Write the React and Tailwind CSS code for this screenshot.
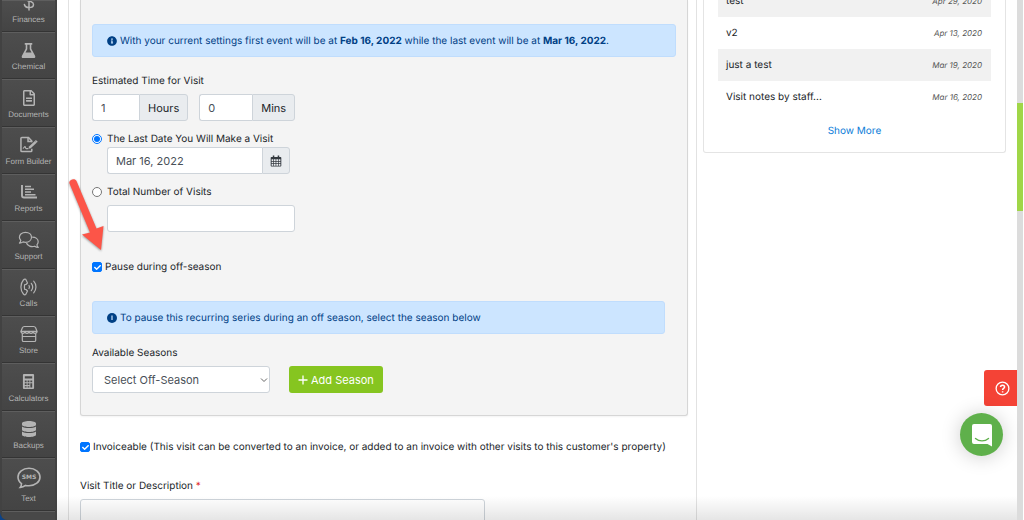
import { FaCheck, FaDatabase, FaInfoCircle, FaRegFileAlt } from 'react-icons/fa';

function DollarIcon() {
  return (
    <svg viewBox="0 0 12 20" className="h-5 w-3 shrink-0" fill="none" stroke="currentColor" strokeWidth="1.500" strokeLinecap="round" aria-hidden="true">
      <path d="M6 1v18M10.300 6.500C9.800 4.600 8.200 3.700 6 3.700c-2.500 0-4.200 1.100-4.200 3 0 4.500 8.700 2.100 8.700 6.700 0 1.900-1.800 3.100-4.500 3.100-2.400 0-4.200-1-4.600-3" />
    </svg>
  );
}

function FlaskIcon() {
  return (
    <svg viewBox="0 0 16 18" className="h-[17px] w-[15px]" fill="currentColor" aria-hidden="true">
      <path
        fillRule="evenodd"
        d="M4 1h8v1.800h-1v4.400l4 7.300c.7 1.300 0 2.500-1.300 2.500H2.300C1 17 .3 15.800 1 14.500l4-7.300V2.800H4zM6.700 2.800v4.900L4.800 11.200h6.400L9.300 7.700V2.800z"
      />
    </svg>
  );
}

function FormIcon() {
  return (
    <svg viewBox="0 0 20 18" className="h-[17px] w-[19px]" fill="none" stroke="currentColor" strokeWidth="1.600" aria-hidden="true">
      <path d="M13.500 6.500V5.300L10 1.500H3a1 1 0 0 0-1 1v13a1 1 0 0 0 1 1h9.500a1 1 0 0 0 1-1v-2" />
      <path d="M9.500 1.500v4.300h4" />
      <path d="M4 13.300c1-.2 1.500-2 2.300-2 .6 0 .4 2 1.200 2h2.300" strokeWidth="1.200" />
      <path d="M10 13.600l.5-2.400 6.200-5.900 1.900 1.900-6.200 5.900z" fill="currentColor" stroke="none" />
      <path d="M17.300 4.700l1.900 1.900" />
    </svg>
  );
}

function ReportsIcon() {
  return (
    <svg viewBox="0 0 18 16" className="h-4 w-[18px]" fill="none" stroke="currentColor" strokeWidth="1.900" aria-hidden="true">
      <path d="M2 1v10.500a2 2 0 0 0 2 2h13" />
      <path d="M5 2.500h6M5 5.300h9M5 8h6M5 10.700h10.500" strokeWidth="1.500" />
    </svg>
  );
}

function SupportIcon() {
  return (
    <svg viewBox="0 0 22 18" className="h-[18px] w-[22px]" fill="none" stroke="currentColor" strokeWidth="1.200" strokeLinejoin="round" aria-hidden="true">
      <path d="M7.500 1.300c3.500 0 6 2.200 6 5s-2.500 5-6 5c-.9 0-1.700-.1-2.500-.4-1 .8-2.200 1.200-3.600 1.200.8-.8 1.300-1.700 1.400-2.700C2 8.500 1.400 7.400 1.400 6.300c0-2.800 2.600-5 6.100-5z" />
      <path d="M14.200 6.200c3.500 0 6 2 6 4.600 0 1.200-.5 2.200-1.300 3 .1 1 .6 1.900 1.400 2.600-1.400 0-2.600-.4-3.600-1.200-3.400 1.100-7.300-.3-8.200-3.200" />
    </svg>
  );
}

function CallsIcon() {
  return (
    <svg viewBox="0 0 18 18" className="h-[18px] w-[18px]" fill="none" stroke="currentColor" strokeWidth="1.200" strokeLinecap="round" strokeLinejoin="round" aria-hidden="true">
      <path d="M5.700 1.300L7.500 5 6 6.500H4.800c-.5 1.600-.5 3.400 0 5H6L7.500 13l-1.800 3.600c-.8.500-1.700.1-2.300-.6-3.300-3.700-3.300-10.300 0-14 .6-.7 1.500-1.200 2.300-.7z" />
      <path d="M9 7.500c.6.900.6 2.100 0 3M11.300 5.300c1.700 2.200 1.700 5.200 0 7.400M13.700 3.200c3 3.300 3 8.300 0 11.600" />
    </svg>
  );
}

function StoreIcon() {
  return (
    <svg viewBox="0 0 18 18" className="h-[18px] w-[18px]" fill="none" stroke="currentColor" strokeWidth="1.200" strokeLinejoin="round" aria-hidden="true">
      <path d="M4.300 1.500h9.400c1 0 1.500.4 1.900 1.200L17 6.300H1l1.400-3.600c.4-.8.900-1.200 1.900-1.200z" />
      <path d="M1 6.300c0 2.700 4 2.700 4 0 0 2.700 4 2.700 4 0 0 2.700 4 2.700 4 0 0 2.700 4 2.700 4 0" />
      <path d="M2.300 8.800v6.400c0 .7.500 1.300 1.300 1.300h10.800c.8 0 1.300-.6 1.300-1.300V8.800M2.300 11.500h13.400" />
    </svg>
  );
}

function CalculatorIcon() {
  return (
    <svg viewBox="0 0 14 18" className="h-[17px] w-[13px]" aria-hidden="true">
      <rect x="1" y="1" width="12" height="16" rx="1" fill="currentColor" />
      <path d="M3 3.300h8v2.500H3zM3 8h2v1.800H3zM6 8h2v1.800H6zM9 8h2v1.800H9zM3 11h2v1.800H3zM6 11h2v1.800H6zM9 11h2v4.500H9zM3 14h2v1.500H3zM6 14h2v1.500H6z" fill="#484848" />
    </svg>
  );
}

function SmsIcon() {
  return (
    <svg viewBox="0 0 24 22" className="h-[22px] w-6" aria-hidden="true">
      <path d="M12 1.200c6.200 0 11 3.900 11 8.800s-4.800 8.800-11 8.800c-1.200 0-2.400-.1-3.500-.4-1.500 1.200-3.300 1.900-5.300 2 .9-1.100 1.300-2.300 1.300-3.700C2.300 15 1 12.600 1 10c0-4.900 4.800-8.800 11-8.800z" fill="none" stroke="currentColor" strokeWidth="1.600" />
      <text x="12" y="12" textAnchor="middle" fill="currentColor" fontSize="6" fontWeight="700" fontFamily="DejaVu Sans, sans-serif">SMS</text>
    </svg>
  );
}

function CalendarIcon() {
  return (
    <svg viewBox="0 0 12 12" className="h-3 w-3" aria-hidden="true">
      <path d="M1.500 2h9c.5 0 .8.300.8.800v8c0 .5-.3.800-.8.800h-9c-.5 0-.8-.3-.8-.8v-8c0-.5.300-.8.800-.8zM2.800.500h1.500V3H2.800zM7.700.500h1.500V3H7.700z" fill="#343a40" />
      <path d="M1.600 4.300h1.700V6H1.600zM4 4.300h1.600V6H4zM6.300 4.300H8V6H6.300zM8.700 4.300h1.700V6H8.700zM1.600 6.700h1.700v1.600H1.600zM4 6.700h1.600v1.600H4zM6.300 6.700H8v1.600H6.300zM8.700 6.700h1.700v1.600H8.700zM1.600 9h1.700v1.700H1.600zM4 9h1.600v1.700H4zM6.300 9H8v1.700H6.300zM8.700 9h1.700v1.700H8.700z" fill="#e9ecef" />
    </svg>
  );
}

function NoticeIcon() {
  return (
    <svg viewBox="0 0 10 10" className="h-[10px] w-[10px] shrink-0" aria-hidden="true">
      <circle cx="5" cy="5" r="5" fill="#004085" />
      <path d="M5 2.500v4.500" stroke="#cce5ff" strokeWidth="1.200" />
    </svg>
  );
}

const menu = [
  { label: 'Chemical', icon: <FlaskIcon /> },
  { label: 'Documents', icon: <FaRegFileAlt className="h-4 w-4" /> },
  { label: 'Form Builder', icon: <FormIcon /> },
  { label: 'Reports', icon: <ReportsIcon /> },
  { label: 'Support', icon: <SupportIcon /> },
  { label: 'Calls', icon: <CallsIcon /> },
  { label: 'Store', icon: <StoreIcon /> },
  { label: 'Calculators', icon: <CalculatorIcon /> },
  { label: 'Backups', icon: <FaDatabase className="h-4 w-4" /> },
];

const notes = [
  { title: 'test', date: 'Apr 29, 2020' },
  { title: 'v2', date: 'Apr 13, 2020' },
  { title: 'just a test', date: 'Mar 19, 2020' },
  { title: 'Visit notes by staff...', date: 'Mar 16, 2020' },
];

const itemClass =
  'flex flex-col items-center border-t border-b border-t-[#5e5e5e] border-b-[#343434] bg-linear-to-b from-[#4d4d4d] to-[#444444] text-[8px] leading-3 text-[#b4b4b4]';

function Sidebar() {
  return (
    <div className="w-[57px] shrink-0 bg-[#0b4287]">
      <nav className="flex h-full flex-col overflow-hidden rounded-bl-lg bg-[#424242] px-[2px] font-['Liberation_Sans',sans-serif]">
        <a href="#" className={`${itemClass} h-8 shrink-0 justify-end gap-[3px] overflow-hidden pb-[5px]`}>
          <DollarIcon />
          Finances
        </a>
        {menu.map((item) => (
          <a key={item.label} href="#" className={`${itemClass} flex-1 justify-end pb-[5px] whitespace-nowrap`}>
            <span className="flex h-[22px] items-center">{item.icon}</span>
            {item.label}
          </a>
        ))}
        <a href="#" className={`${itemClass} h-[53px] shrink-0 justify-end gap-1 pb-[5px]`}>
          <SmsIcon />
          Text
        </a>
        <div className="h-[9px] shrink-0 border-t border-[#5e5e5e] bg-[#484848]" />
      </nav>
    </div>
  );
}

function Alert({ icon, children, className }) {
  return (
    <div className={`flex h-[33px] items-center gap-[3px] rounded-[3px] border border-[#c0ddfd] bg-[#cce5ff] px-[14px] text-[#004085] ${className}`}>
      {icon}
      <p>{children}</p>
    </div>
  );
}

const fieldClass = 'h-[27px] border border-[#ced4da] bg-white px-2 text-[11px] text-[#495057]';

function UnitInput({ id, unit, value, width }) {
  return (
    <div className="flex">
      <input id={id} aria-label={unit} defaultValue={value} className={`${fieldClass} rounded-l-[3px] border-r-0 ${width}`} />
      <label htmlFor={id} className="flex h-[27px] items-center rounded-r-[3px] border border-[#ced4da] bg-[#e9ecef] px-2 text-[11px]">
        {unit}
      </label>
    </div>
  );
}

// Native checkbox stays for state, the tick is laid over it
function Checkbox({ id, label }) {
  return (
    <div className="flex h-4 items-center gap-[3px]">
      <span className="grid h-[10px] w-[10px] place-items-center">
        <input
          id={id}
          type="checkbox"
          defaultChecked
          className="peer col-start-1 row-start-1 h-[10px] w-[10px] appearance-none rounded-[2px] border border-[#767676] bg-white checked:border-[#0075ff] checked:bg-[#0075ff]"
        />
        <FaCheck className="pointer-events-none col-start-1 row-start-1 hidden h-[7px] w-[7px] text-white peer-checked:block" />
      </span>
      <label htmlFor={id}>{label}</label>
    </div>
  );
}

function VisitForm() {
  return (
    <form className="flex min-w-0 flex-1 flex-col border-x border-[#e2e2e2] pr-2 pl-[11px]">
      <section className="flex flex-col rounded-b-[3px] border border-t-0 border-[#d6d6d6] bg-[#f4f4f4] px-[11px] pt-6 pb-[22px] shadow-xs">
        <Alert icon={<FaInfoCircle className="h-[10px] w-[10px] shrink-0" />} className="">
          With your current settings first event will be at <b>Feb 16, 2022</b> while the last event will be at <b>Mar 16, 2022</b>.
        </Alert>

        <p className="mt-4">Estimated Time for Visit</p>
        <div className="mt-[5px] flex gap-[11px]">
          <UnitInput id="hours" unit="Hours" value="1" width="w-[47px]" />
          <UnitInput id="mins" unit="Mins" value="0" width="w-[53px]" />
        </div>

        <div className="mt-[10px] flex h-4 items-center gap-[5px]">
          <input id="last-date" type="radio" name="end" defaultChecked className="h-[10px] w-[10px] accent-[#0075ff]" />
          <label htmlFor="last-date">The Last Date You Will Make a Visit</label>
        </div>
        <div className="ml-[15px] flex">
          <input aria-label="Last visit date" defaultValue="Mar 16, 2022" className={`${fieldClass} w-[155px] rounded-l-[3px] border-r-0`} />
          <button type="button" aria-label="Open calendar" className="flex h-[27px] w-7 items-center justify-center rounded-r-[3px] border border-[#ced4da] bg-[#e9ecef]">
            <CalendarIcon />
          </button>
        </div>

        <div className="mt-[10px] flex h-4 items-center gap-[5px]">
          <input id="total" type="radio" name="end" className="h-[10px] w-[10px] accent-[#0075ff]" />
          <label htmlFor="total">Total Number of Visits</label>
        </div>
        <input aria-label="Total number of visits" className={`${fieldClass} mt-[5px] ml-[15px] w-[188px] rounded-[3px]`} />

        <div className="mt-[27px]">
          <Checkbox id="pause" label="Pause during off-season" />
        </div>

        <Alert icon={<NoticeIcon />} className="mt-[26px] mr-[11px]">
          To pause this recurring series during an off season, select the season below
        </Alert>

        <label htmlFor="season" className="mt-[11px]">Available Seasons</label>
        <div className="mt-[5px] flex items-center gap-[19px]">
          <div className="grid w-[178px] items-center">
            <select id="season" className={`${fieldClass} col-start-1 row-start-1 w-full appearance-none rounded-[3px] pl-[11px]`}>
              <option>Select Off-Season</option>
            </select>
            <svg viewBox="0 0 8 8" className="pointer-events-none col-start-1 row-start-1 mr-[2px] h-2 w-2 justify-self-end" fill="none" stroke="#666" aria-hidden="true">
              <path d="M1 2.500l3 3 3-3" />
            </svg>
          </div>
          <button type="button" className="flex h-[27px] items-center gap-[3px] rounded-[3px] bg-[#86c520] px-[9px] text-[11px] text-white">
            <svg viewBox="0 0 10 10" className="h-[10px] w-[10px]" stroke="currentColor" strokeWidth="1.300" aria-hidden="true">
              <path d="M5 .5v9M.5 5h9" />
            </svg>
            Add Season
          </button>
        </div>
      </section>

      <div className="mt-[23px]">
        <Checkbox
          id="invoiceable"
          label="Invoiceable (This visit can be converted to an invoice, or added to an invoice with other visits to this customer's property)"
        />
      </div>

      <label htmlFor="title" className="mt-[23px]">
        Visit Title or Description <span className="text-[#e01f1f]">*</span>
      </label>
      <input id="title" className={`${fieldClass} mt-[5px] w-[405px] shrink-0 rounded-[3px]`} />
    </form>
  );
}

function NotesPanel() {
  return (
    <aside className="w-[320px] shrink-0 pr-[11px] pl-[6px]">
      <div className="flex h-[153px] flex-col justify-end rounded-b-[3px] border border-t-0 border-[#e4e4e4] px-[14px] pb-[13px]">
        <table className="w-full">
          <tbody>
            {notes.map((note) => (
              <tr key={note.date} className="h-8 odd:bg-[#f1f1f1]">
                <td className="pl-2">{note.title}</td>
                <td className="pr-[9px] text-right text-[8px] text-[#555] italic">{note.date}</td>
              </tr>
            ))}
          </tbody>
        </table>
        <a href="#" className="mt-[10px] text-center text-[#0b7cd8]">Show More</a>
      </div>
    </aside>
  );
}

export default function App() {
  return (
    <div className="relative flex h-screen overflow-hidden bg-white font-['Inter',sans-serif] text-[10px] leading-4 text-[#212529] [text-rendering:geometricPrecision]">
      <Sidebar />
      <main className="flex min-w-0 flex-1 pl-[11px]">
        <VisitForm />
        <NotesPanel />
      </main>
      <div className="mr-px w-[6px] shrink-0 bg-[#dcdcdc] pt-[103px]">
        <div className="h-[108px] bg-[#a0d648]" />
      </div>

      {/* Fade along the bottom edge */}
      <div className="pointer-events-none absolute right-[7px] bottom-0 left-[57px] h-6 bg-linear-to-b from-transparent to-black/10" />

      {/* Pointer to the off-season option */}
      <svg viewBox="0 0 50 90" className="pointer-events-none absolute top-[170px] left-[62px] h-[90px] w-[50px] drop-shadow-[0_1px_1px_rgba(0,0,0,0.4)]" aria-hidden="true">
        <path d="M7.500 13.500C6 9.800 13 7.500 14.500 11L34.500 58.500 41.500 56 39 80 20 64.500 28 62.500z" fill="#fc5548" />
      </svg>

      <button type="button" aria-label="Help" className="absolute right-[7px] bottom-[114px] flex h-9 w-[33px] items-center justify-center rounded-l-[3px] bg-[#f44336] pl-[3px] text-white">
        <svg viewBox="0 0 16 16" className="h-[15px] w-[15px]" fill="none" stroke="currentColor" strokeWidth="1.400" aria-hidden="true">
          <circle cx="8" cy="8" r="6.800" />
          <path d="M5.900 6.500c0-2.800 4.300-2.700 4.300-.1 0 1.500-2.100 1.600-2.100 3.100M8.100 10.800v1.500" strokeWidth="1.600" />
        </svg>
      </button>

      <button type="button" aria-label="Open chat" className="absolute right-[21px] bottom-[64px] flex h-[43px] w-[43px] items-center justify-center rounded-full bg-[#5fb04b] shadow-[0_1px_20px_rgba(0,0,0,0.2)]">
        <svg viewBox="0 0 22 24" className="h-6 w-[22px]" aria-hidden="true">
          <path d="M3 1h16a2 2 0 0 1 2 2v20.500L16.500 21H3a2 2 0 0 1-2-2V3a2 2 0 0 1 2-2z" fill="#fff" />
          <path d="M4.500 15.500c3.800 3.200 9.200 3.200 13 0" fill="none" stroke="#5fb04b" strokeWidth="1.400" strokeLinecap="round" />
        </svg>
      </button>
    </div>
  );
}
